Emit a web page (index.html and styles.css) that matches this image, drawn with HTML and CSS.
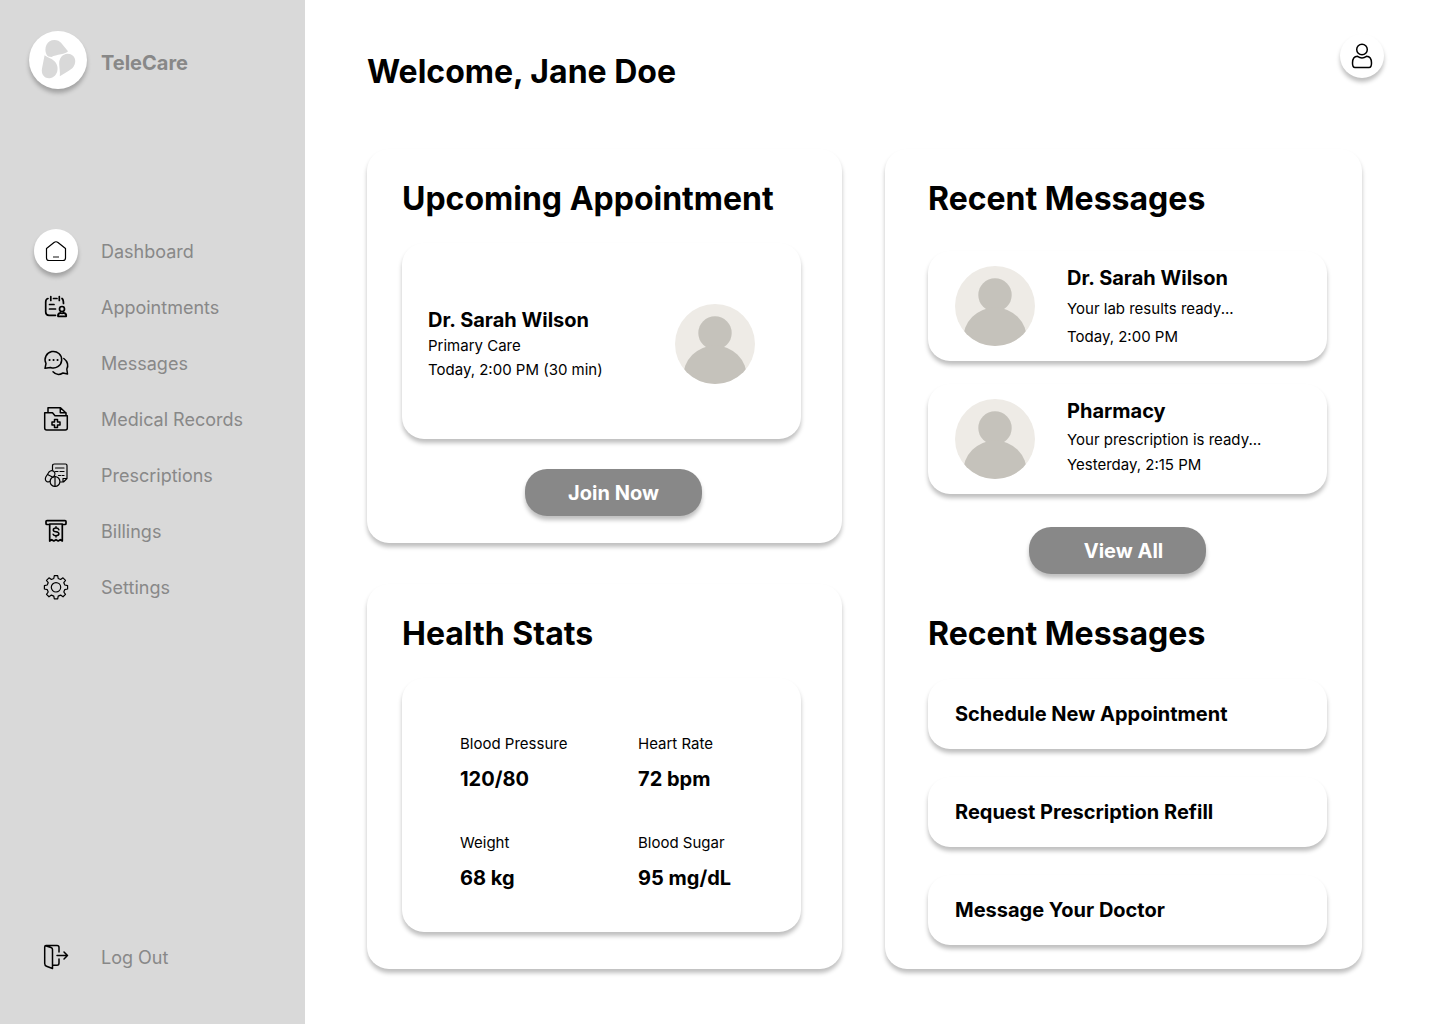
FILE: index.html
```html
<!DOCTYPE html>
<html lang="en">
<head>
<meta charset="utf-8">
<meta name="viewport" content="width=device-width, initial-scale=1">
<title>TeleCare Dashboard</title>
<link rel="stylesheet" href="styles.css">
</head>
<body>
<svg class="defs" aria-hidden="true">
  <symbol id="avatar" viewBox="0 0 80 80">
    <rect width="80" height="80" fill="#eeebe6"/>
    <circle cx="40" cy="29" r="16.7" fill="#c5c2bb"/>
    <circle cx="40" cy="73.5" r="32" fill="#c5c2bb"/>
  </symbol>
</svg>
<div class="app">
  <aside class="sidebar">
    <div class="brand">
      <span class="brand-mark">
        <svg viewBox="0 0 58 58" width="58" height="58" fill="#d9d9d9" aria-hidden="true">
          <path d="M17.500 23.500C14.500 17 18 9 25.500 9C28.500 9 30.500 10.300 32 11.700L39 20.300C38 21.800 35 22.600 32 23.200C28 24 25 24.500 22.500 26C20 26 18.500 25.300 17.500 23.500Z"/>
          <path d="M15.600 24.300C18.500 26.500 22.300 27.300 25.500 30.300C31 35.500 29 46.500 20.500 47.200C15 47.500 12 43 13 37.500Z"/>
          <path d="M30.800 45.200C31.300 41 30.300 37 30.200 33C30 27 33.500 23.200 38.500 22.800C45.500 22.800 48.500 30 44.500 35.800C43 38 41 39 39 40.200Z"/>
        </svg>
      </span>
      <span class="brand-name">TeleCare</span>
    </div>
    <nav class="nav" aria-label="Main">
      <a class="nav-item" href="#dashboard" aria-current="page">
        <span class="nav-icon nav-icon-active"><svg viewBox="0 0 40 40"><path d="M10.500 17.500L18 11.500Q20 10 22 11.500L29.500 17.500V27Q29.500 29.500 27 29.500H13Q10.500 29.500 10.500 27Z"/><path class="muted" d="M17 26H23"/></svg></span>
        Dashboard</a>
      <a class="nav-item" href="#appointments">
        <span class="nav-icon"><svg viewBox="0 -1 40 40"><g class="bold"><path d="M12 10.500Q9.700 11 9.700 14V24Q9.700 27.300 13 27.300H19.500M17.500 10.500H21M26 10.500Q27.500 11.500 27.500 15.500M14.800 8.500V12.500M23.300 8.500V12.500M13.500 16.500H18M13.500 21H19.500"/><circle cx="26" cy="21" r="2.500"/><path d="M22 28.300Q21.500 25.500 24.500 24.800Q26 26 27.700 24.800Q30.700 25.500 30.200 28.300Z"/></g></svg></span>
        Appointments</a>
      <a class="nav-item" href="#messages">
        <span class="nav-icon"><svg viewBox="0 -1 40 40"><path class="mid" d="M9 24.300L10 19.500A8.300 8.300 0 1 1 14.500 23.500ZM27.800 14.500C32 17.500 32.500 22 30.800 25L31.500 30L27 29C23.500 31 19.500 30.500 17 27.700"/><path class="dots" d="M13.500 16H13.600M17.500 16H17.600M21.500 16H21.600"/></svg></span>
        Messages</a>
      <a class="nav-item" href="#records">
        <span class="nav-icon"><svg viewBox="0 -1 40 40"><path class="mid" d="M8.700 12.700H16.500L19 15.700H31.300V28Q31.300 30 29.300 30H10.700Q8.700 30 8.700 28ZM12 12.500V7.700H24.500L30 13V15.500M24.300 8V12.800H30"/><path class="mid" d="M18.500 19.500H21.500V22H24V25H21.500V27.500H18.500V25H16V22H18.500Z"/></svg></span>
        Medical Records</a>
      <a class="nav-item" href="#prescriptions">
        <span class="nav-icon"><svg viewBox="0 -1 40 40"><path d="M16.500 14V10Q16.500 8 18.500 8H29.500Q31 8 31 9.500V22.500L27.500 26H24.500M27 26V22.500H31M19.500 12H28M19.500 15.500H22M24 15.500H28M22.500 19.500H24.500M26 19.500H28"/><path d="M9.800 21L13 16Q15.500 13.300 18 15.500Q19.500 17 18.700 19L17.500 21M9.800 21Q8.500 24.500 11 25.700Q13 26.500 14.200 25M11.500 18.500L16.500 21"/><circle cx="19" cy="25.500" r="4.900"/><path d="M19 20.500V30.500"/></svg></span>
        Prescriptions</a>
      <a class="nav-item" href="#billings">
        <span class="nav-icon"><svg viewBox="0 -1 40 40"><path class="bold" d="M12.500 12.500H11Q10 12.500 10 11.500V9.500Q10 8.700 11 8.700H29Q30 8.700 30 9.500V11.500Q30 12.500 29 12.500H27.500M13.700 12H26.300V29L24.300 27.700L22.200 29L20 27.700L17.800 29L15.700 27.700L13.700 29Z"/><path class="mid" d="M22.900 17.700Q22.300 16.100 20 16.100Q17.300 16.100 17.300 17.900Q17.300 19.500 20 19.800Q22.900 20.200 22.900 21.800Q22.900 23.700 20 23.700Q17.700 23.700 17.100 22.200M20 14.700V16M20 23.700V25"/></svg></span>
        Billings</a>
      <a class="nav-item" href="#settings">
        <span class="nav-icon"><svg viewBox="0 -1 40 40"><circle cx="20" cy="19.300" r="4.700"/><path d="M17.800 10.500L18.300 7.700H21.700L22.200 10.500L24.600 11.500L27 9.800L29.500 12.300L27.800 14.700L28.800 17L31.600 17.600V21L28.800 21.600L27.800 24L29.500 26.400L27 28.800L24.600 27.100L22.200 28.100L21.700 30.900H18.300L17.800 28.100L15.400 27.100L13 28.800L10.500 26.400L12.200 24L11.200 21.600L8.400 21V17.600L11.200 17L12.200 14.700L10.500 12.300L13 9.800L15.400 11.500Z"/></svg></span>
        Settings</a>
    </nav>
    <a class="nav-item logout" href="#logout">
      <span class="nav-icon"><svg viewBox="0 -1 40 40"><path class="mid" d="M23 14V9.500Q23 7.500 21 7.500H10Q8.700 7.500 8.700 9V25.500Q8.700 27.500 10.500 28.200L16.500 30.500V11.500Q16.500 10 15 9.500L9.500 7.700M16.500 27.300H21Q23 27.300 23 25V21M21 17.500H31.500M28 14L31.500 17.500L28 21"/></svg></span>
      Log Out</a>
  </aside>

  <main class="main">
    <header class="header">
      <h1>Welcome, Jane Doe</h1>
      <button class="profile" type="button" aria-label="Profile">
        <svg viewBox="0 0 44 44" width="44" height="44" aria-hidden="true"><circle cx="22" cy="15.500" r="5.300"/><path d="M17.500 22.300Q12.500 22.500 12.500 29Q12.500 33.500 15 33.500H29Q31.500 33.500 31.500 29Q31.500 22.500 26.500 22.300Q22 25.500 17.500 22.300Z"/></svg>
      </button>
    </header>

    <div class="board">
      <div class="column">
        <section class="card">
          <h2>Upcoming Appointment</h2>
          <div class="panel appointment">
            <div>
              <h3>Dr. Sarah Wilson</h3>
              <p>Primary Care</p>
              <p>Today, 2:00 PM (30 min)</p>
            </div>
            <svg class="avatar" role="img" aria-label="Dr. Sarah Wilson"><use href="#avatar"/></svg>
          </div>
          <button class="button join" type="button">Join Now</button>
        </section>

        <section class="card card-stats">
          <h2>Health Stats</h2>
          <dl class="panel stats">
            <div><dt>Blood Pressure</dt><dd>120/80</dd></div>
            <div><dt>Heart Rate</dt><dd>72 bpm</dd></div>
            <div><dt>Weight</dt><dd>68 kg</dd></div>
            <div><dt>Blood Sugar</dt><dd>95 mg/dL</dd></div>
          </dl>
        </section>
      </div>

      <section class="card card-side">
        <h2>Recent Messages</h2>
        <div class="messages">
          <article class="panel message">
            <svg class="avatar" role="img" aria-label="Dr. Sarah Wilson"><use href="#avatar"/></svg>
            <div>
              <h3>Dr. Sarah Wilson</h3>
              <p>Your lab results ready...</p>
              <p>Today, 2:00 PM</p>
            </div>
          </article>
          <article class="panel message message-compact">
            <svg class="avatar" role="img" aria-label="Pharmacy"><use href="#avatar"/></svg>
            <div>
              <h3>Pharmacy</h3>
              <p>Your prescription is ready...</p>
              <p>Yesterday, 2:15 PM</p>
            </div>
          </article>
        </div>
        <button class="button view-all" type="button">View All</button>

        <h2 class="actions-title">Recent Messages</h2>
        <div class="actions">
          <button class="panel action" type="button">Schedule New Appointment</button>
          <button class="panel action" type="button">Request Prescription Refill</button>
          <button class="panel action" type="button">Message Your Doctor</button>
        </div>
      </section>
    </div>
  </main>
</div>
</body>
</html>
```
FILE: styles.css
```css
* {
  box-sizing: border-box;
}

body {
  margin: 0;
  background: #fff;
  color: #000;
  font-family: Inter, sans-serif;
  font-size: 15px;
}

h1, h2, h3, p, dl, dd {
  margin: 0;
}

button {
  border: 0;
  font-family: inherit;
  cursor: pointer;
}

.defs {
  display: none;
}

.app {
  display: flex;
  min-height: 100vh;
}

/* Sidebar */

.sidebar {
  flex: none;
  display: flex;
  flex-direction: column;
  width: 305px;
  padding: 31px 0 39px;
  background: #d9d9d9;
}

.brand {
  display: flex;
  align-items: center;
  gap: 14px;
  padding-left: 29px;
}

.brand-mark {
  width: 58px;
  height: 58px;
  border-radius: 50%;
  background: #fff;
  box-shadow: 0 4px 4px rgba(0, 0, 0, 0.25);
}

.brand-name {
  padding-top: 6px;
  color: #888;
  font-size: 20px;
  font-weight: 700;
}

.nav {
  margin-top: 134px;
}

.nav-item {
  display: flex;
  align-items: center;
  gap: 23px;
  height: 56px;
  padding-left: 34px;
  color: #888;
  font-size: 18px;
  text-decoration: none;
}

.nav-icon {
  display: flex;
  align-items: center;
  justify-content: center;
  width: 44px;
  height: 44px;
  border-radius: 50%;
}

.nav-icon-active {
  background: #fff;
  box-shadow: 0 4px 4px rgba(0, 0, 0, 0.25);
}

.nav-icon svg {
  width: 40px;
  height: 40px;
  fill: none;
  stroke: #000;
  stroke-width: 1.2;
  stroke-linejoin: round;
  stroke-linecap: round;
}

.nav-icon .mid {
  stroke-width: 1.5;
}

.nav-icon .bold {
  stroke-width: 1.7;
}

.nav-icon .dots {
  stroke-width: 2;
}

.nav-icon .muted {
  stroke: #888;
  stroke-width: 2;
  stroke-linecap: butt;
}

.logout {
  margin-top: auto;
}

/* Main area */

.main {
  flex: 1;
  min-width: 0;
  padding: 34px 78px 55px 62px;
}

.header {
  display: flex;
  align-items: flex-start;
  justify-content: space-between;
  min-height: 115px;
  margin-right: -22px;
}

h1, h2 {
  font-size: 32px;
  font-weight: 700;
  line-height: 40px;
}

h1 {
  margin-top: 18px;
}

h3 {
  font-size: 20px;
  font-weight: 700;
}

.profile {
  width: 44px;
  height: 44px;
  padding: 0;
  border-radius: 50%;
  background: #fff;
  box-shadow: 0 4px 4px rgba(0, 0, 0, 0.25);
}

.profile svg {
  display: block;
  fill: none;
  stroke: #000;
  stroke-width: 1.5;
}

.board {
  display: grid;
  grid-template-columns: 475fr 477fr;
  gap: 43px;
}

.column {
  display: flex;
  flex-direction: column;
  gap: 41px;
}

.card,
.panel {
  border-radius: 22px;
  background: #fff;
  box-shadow: 0 4px 4px rgba(0, 0, 0, 0.25);
}

.card {
  padding: 30px 41px 27px 35px;
}

.card h2 {
  margin-bottom: 24px;
}

.card-stats {
  padding-bottom: 37px;
}

.card-side {
  padding: 30px 35px 24px 43px;
}

.card-side h2 {
  margin-bottom: 32px;
}

.avatar {
  flex: none;
  width: 80px;
  height: 80px;
  border-radius: 50%;
}

.appointment {
  display: flex;
  align-items: center;
  justify-content: space-between;
  min-height: 196px;
  padding: 6px 46px 0 26px;
}

.appointment h3 {
  line-height: 28px;
}

.appointment p {
  line-height: 24px;
}

.button {
  display: block;
  width: 177px;
  height: 47px;
  border-radius: 22px;
  background: #888;
  box-shadow: 0 4px 4px rgba(0, 0, 0, 0.25);
  color: #fff;
  font-size: 20px;
  font-weight: 700;
}

.join {
  margin: 30px 0 0 123px;
}

.view-all {
  margin: 33px 0 0 101px;
  padding-left: 18px;
}

.stats {
  display: grid;
  grid-template-columns: 178px 1fr;
  row-gap: 39px;
  padding: 56px 20px 39px 58px;
}

.stats dt {
  line-height: 20px;
}

.stats dd {
  margin-top: 10px;
  font-size: 20px;
  font-weight: 700;
  line-height: 30px;
}

.messages {
  display: grid;
  gap: 23px;
}

.message {
  display: flex;
  align-items: flex-start;
  gap: 32px;
  min-height: 110px;
  padding: 15px 27px 10px;
}

.message h3 {
  margin-bottom: 5px;
  line-height: 24px;
}

.message p {
  line-height: 28px;
}

.message-compact h3 {
  margin-bottom: 4px;
}

.message-compact p {
  line-height: 25px;
}

.card-side .actions-title {
  margin: 40px 0 25px;
}

.actions {
  display: grid;
  gap: 28px;
}

.action {
  height: 70px;
  padding: 0 27px;
  color: #000;
  font-size: 20px;
  font-weight: 700;
  text-align: left;
}
```
